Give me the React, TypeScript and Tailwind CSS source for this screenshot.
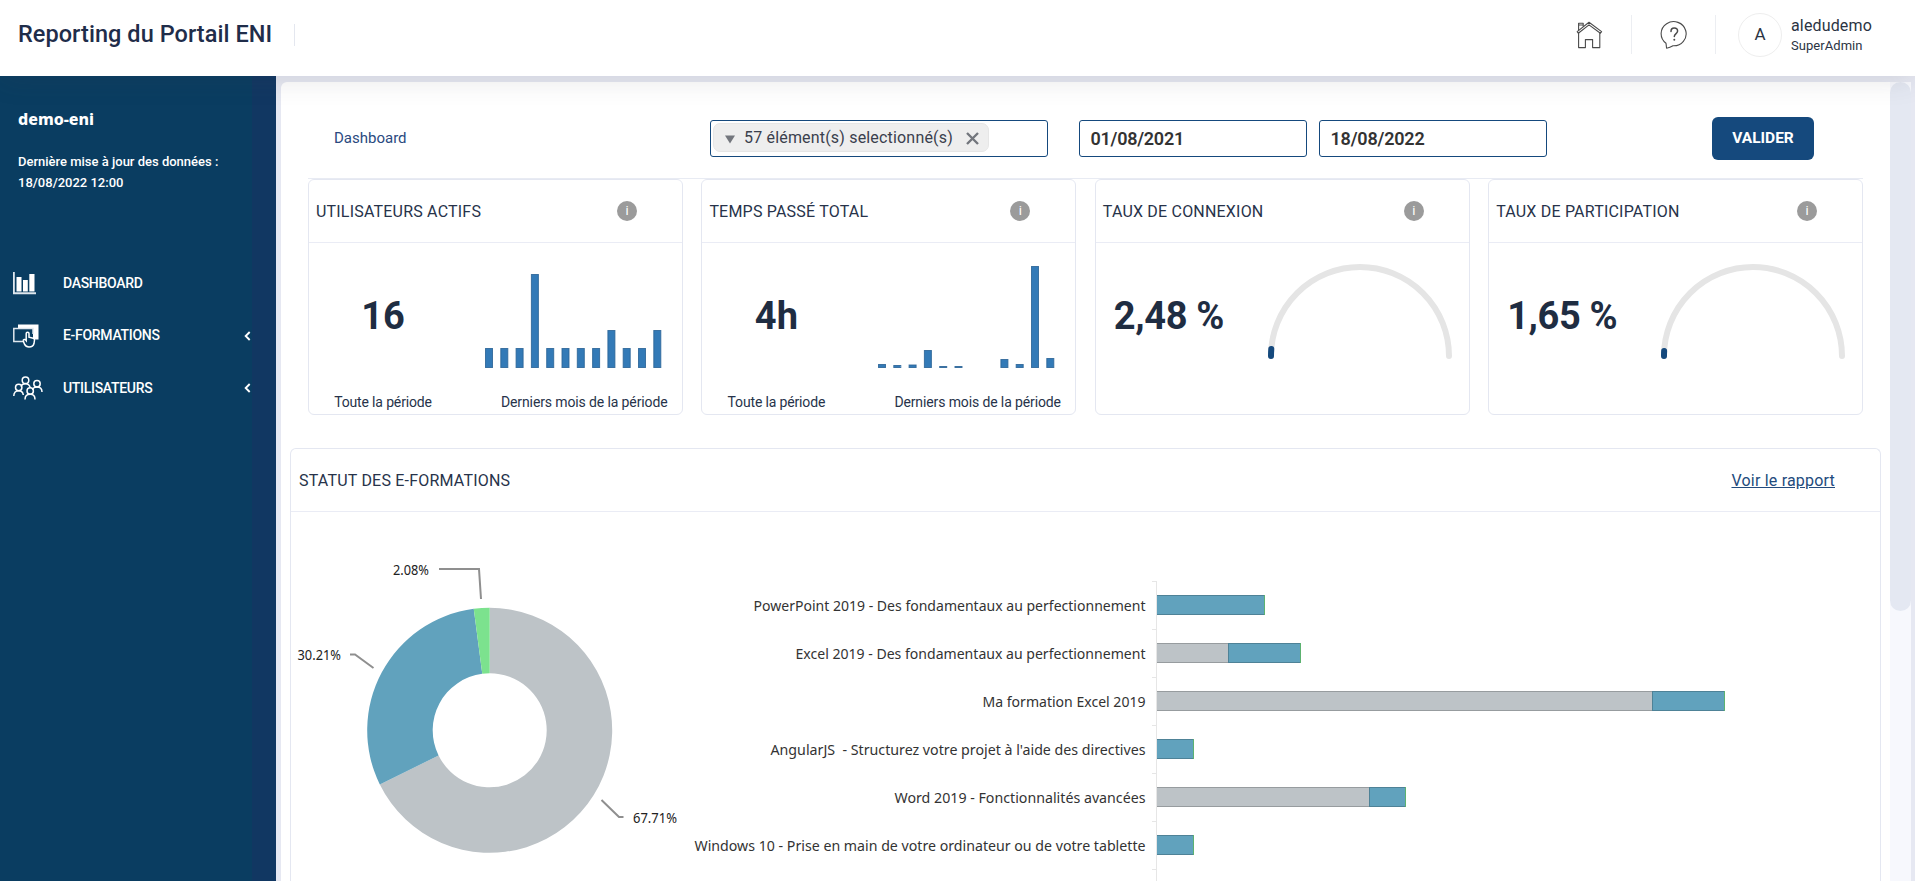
import type { ReactNode } from 'react';

const ACTIVE_USERS = [20, 20, 20, 94, 20, 20, 20, 20, 38, 20, 20, 38];
const TIME_SPENT = [4, 3, 3.5, 18, 2, 2, 0, 0, 9, 4, 102, 10];

const TRAININGS = [
  { name: 'PowerPoint 2019 - Des fondamentaux au perfectionnement', width: 392, todo: 0, doing: 107 },
  { name: 'Excel 2019 - Des fondamentaux au perfectionnement', width: 350, todo: 71, doing: 72 },
  { name: 'Ma formation Excel 2019', width: 163, todo: 495, doing: 72 },
  { name: "AngularJS \u00a0- Structurez votre projet à l'aide des directives", width: 375, todo: 0, doing: 36 },
  { name: 'Word 2019 - Fonctionnalités avancées', width: 251, todo: 212, doing: 36 },
  { name: 'Windows 10 - Prise en main de votre ordinateur ou de votre tablette', width: 451, todo: 0, doing: 36 },
];

function HouseIcon() {
  return (
    <svg width="27" height="28" viewBox="0 0 27 28" fill="none" stroke="#4a4a4a" strokeWidth="1.1" strokeLinejoin="round">
      <path d="M1.2 10.6 13 1.2 25.6 10.6 24.4 12.2 13 3.9 2.3 12.2Z" />
      <path d="M2.6 9.4V2.2H7.2V5.6M2.6 4H7" />
      <path d="M2.6 12V26.6H9.4V18.6H16.6V26.6H23.8V12" />
    </svg>
  );
}

function HelpIcon() {
  return (
    <svg width="28" height="30" viewBox="0 0 28 30" fill="none" stroke="#4a4a4a" strokeWidth="1.1" strokeLinejoin="round" strokeLinecap="round">
      <path d="M6 23.300A12.500 12.100 0 1 1 13 25.800C10.800 27.200 8.800 27.900 6.600 28.200 6.300 26.500 6.300 25 6 23.300Z" />
      <path d="M11 11.400C11 9.200 12.400 8 14.200 8S17.600 9.200 17.600 11.100C17.600 13.600 14.300 13.600 14.300 16.600" strokeWidth="1.5" />
      <path d="M14.300 19.600V19.800" strokeWidth="1.900" />
    </svg>
  );
}

function ChartIcon() {
  return (
    <svg width="23" height="24" viewBox="0 0 23 24">
      <path d="M0 1H1.800V21.300H23V23.300H0Z" fill="#dfe7ee" />
      <path d="M3.500 6H8.500V20.500H3.500ZM10 9H14.800V20.500H10ZM16.300 3H21.500V20.500H16.300Z" fill="#fff" />
    </svg>
  );
}

function TrainingIcon() {
  return (
    <svg width="27" height="24" viewBox="0 0 27 24">
      <path d="M5 .500H25.500V15.500H20V4.500H5Z" fill="#fff" />
      <path d="M10.500 17.500H.8V4.500H20V10" fill="none" stroke="#dfe7ee" strokeWidth="1.500" />
      <path
        d="M13.200 16V9.500C13.200 7.700 16 7.700 16 9.500V13.200L20.300 14.200C21.300 14.500 21.600 15.200 21.500 16.200L21 19.500C20.500 21.700 18.500 23 16 23 13.500 23 12.300 21.800 11.500 20.200L10.300 17C10 15.300 12 14.800 13.200 16.500Z"
        fill="#0a3d61"
        stroke="#fff"
        strokeWidth="1.500"
      />
    </svg>
  );
}

function UsersIcon() {
  return (
    <svg width="30" height="24" viewBox="0 0 30 24" fill="none" stroke="#fff" strokeWidth="1.500">
      <circle cx="12.500" cy="4.300" r="3.300" />
      <circle cx="5.700" cy="11.500" r="3.200" />
      <circle cx="24" cy="7.800" r="3.200" />
      <circle cx="17.200" cy="15" r="3.200" />
      <path d="M.8 20C.8 16.500 2.800 14.700 5.700 14.700S10 16.500 10.300 19M8 10.500C8.500 8.700 10 7.700 12.500 7.700S16.500 9 17.200 11.500M19.500 14C20 12 21.500 11 24 11 27 11 29 13 29 16M12 23.500C12 20 14 18.300 17.200 18.300S22 20 22 23.500" />
    </svg>
  );
}

function Chevron() {
  return (
    <svg width="7" height="10" viewBox="0 0 7 10" fill="none" stroke="#fff" strokeWidth="1.900">
      <path d="M5.700 1 1.700 5 5.700 9" />
    </svg>
  );
}

function MenuItem({ icon, label, chevron }: { icon: ReactNode; label: string; chevron?: boolean }) {
  return (
    <li className="flex h-[52.5px] items-center pl-[13px] pr-[25px]">
      <span className="w-[50px]">{icon}</span>
      <span className="flex-1 text-[14px] font-medium tracking-[-0.3px] text-white">{label}</span>
      {chevron && <Chevron />}
    </li>
  );
}

function Sidebar() {
  return (
    <aside className="flex w-[276px] shrink-0 flex-col bg-[linear-gradient(to_right,#0a3d61_252px,#113762_252px)] text-white">
      <h2 className="mt-[32px] pl-[18px] font-['Noto_Sans'] text-[16px] leading-[22px] font-extrabold tracking-[0px]">demo-eni</h2>
      <p className="mt-[21px] pl-[18px] text-[13px] leading-[21px] font-medium">
        Dernière mise à jour des données :
        <br />
        18/08/2022 12:00
      </p>
      <ul className="mt-[64px]">
        <MenuItem icon={<ChartIcon />} label="DASHBOARD" />
        <MenuItem icon={<TrainingIcon />} label="E-FORMATIONS" chevron />
        <MenuItem icon={<UsersIcon />} label="UTILISATEURS" chevron />
      </ul>
    </aside>
  );
}

function Header() {
  return (
    <header className="z-10 flex h-[76px] shrink-0 items-start bg-white shadow-[0_4px_28px_rgba(60,60,70,0.13)]">
      <h1 className="mt-[18px] ml-[18px] w-[276px] text-[23.5px] leading-[32px] font-medium tracking-[0.05px] text-[#1f2d4a]">Reporting du Portail ENI</h1>
      <div className="mt-[24px] h-[22px] w-px bg-[#e4e7ef]" />
      <div className="flex-1" />
      <div className="mt-[21px] mr-[28px]">
        <HouseIcon />
      </div>
      <div className="mt-[15px] h-[39px] w-px bg-[#eceef2]" />
      <div className="mt-[20px] mr-[27px] ml-[28px]">
        <HelpIcon />
      </div>
      <div className="mt-[15px] h-[39px] w-px bg-[#eceef2]" />
      <div className="mt-[13px] ml-[22px] flex h-[44px] w-[44px] items-center justify-center rounded-full border border-[#eeeeee] text-[17px] text-[#2b3443]">A</div>
      <div className="mt-[15px] ml-[9px] w-[124px] text-[#2b3443]">
        <div className="text-[16px] leading-[22px] tracking-[0.15px]">aledudemo</div>
        <div className="-mt-px text-[13px] leading-[19px] tracking-[0.05px]">SuperAdmin</div>
      </div>
    </header>
  );
}

function Filters() {
  return (
    <div className="mr-[27px] ml-[27px] flex h-[97px] items-start border-b border-[#e8ebf3]">
      <span className="mt-[46px] w-[402px] pl-[26px] text-[15px] leading-[20px] text-[#2a4a80]">Dashboard</span>
      <div className="mt-[38px] flex h-[37px] w-[338px] items-start rounded-[3px] border border-[#15497d] p-[2px]">
        <div className="flex h-[29px] w-[276px] items-center rounded-[7px] border border-[#e6e6e6] bg-[#eeeeee] pl-[11px]">
          <svg width="10" height="9" viewBox="0 0 10 9" className="mt-[3px]">
            <path d="M0 .5H10L5 8.500Z" fill="#73767d" />
          </svg>
          <span className="ml-[9px] w-[222px] text-[16px] tracking-[0.18px] text-[#3a404d]">57 élément(s) selectionné(s)</span>
          <svg width="13" height="13" viewBox="0 0 13 13" className="mt-[2px]">
            <path d="M1 1 12 12M12 1 1 12" stroke="#73767d" strokeWidth="2.400" />
          </svg>
        </div>
      </div>
      <div className="mt-[38px] ml-[31px] flex h-[37px] w-[228px] items-center rounded-[3px] border border-[#15497d] pl-[10.5px] text-[18px] font-semibold tracking-[-0.25px] text-[#333333]">01/08/2021</div>
      <div className="mt-[38px] ml-[12px] flex h-[37px] w-[228px] items-center rounded-[3px] border border-[#15497d] pl-[10.5px] text-[18px] font-semibold tracking-[-0.2px] text-[#333333]">18/08/2022</div>
      <button className="mt-[35px] ml-[165px] h-[43px] w-[102px] rounded-[6px] bg-[#15497d] text-[15.5px] font-bold text-white">VALIDER</button>
    </div>
  );
}

function KpiCard({ title, children }: { title: string; children: ReactNode }) {
  return (
    <section className="flex h-[236px] flex-col rounded-[6px] border border-[#e4e7f1] bg-white">
      <div className="flex h-[63px] items-center border-b border-[#eaecf5] pl-[7px]">
        <h3 className="w-[301px] pt-px text-[16px] tracking-[0.2px] text-[#27334a]">{title}</h3>
        <span className="flex h-[20px] w-[20px] items-center justify-center rounded-full bg-[#9b9b9b] text-[13px] text-white">i</span>
      </div>
      {children}
    </section>
  );
}

function BarKpi({ value, bars }: { value: string; bars: number[] }) {
  return (
    <div className="flex">
      <div className="flex w-[148px] shrink-0 flex-col items-center">
        <div className="mt-[50px] h-[47px] text-[38px] leading-[47px] font-bold text-[#1f2d42]">{value}</div>
        <div className="mt-[53px] text-[14px] leading-[18px] tracking-[-0.15px] whitespace-nowrap text-[#27334a]">Toute la période</div>
      </div>
      <div className="flex flex-1 flex-col">
        <svg width="190" height="126" viewBox="0 0 190 126" className="ml-[28px]">
          {bars.map((h, i) =>
            h > 0 ? (
              <rect key={i} x={0.500 + i * 15.300} y={125.500 - h} width="7" height={h - 1} fill="#337ab7" stroke="#2a6496" strokeOpacity="0.85" />
            ) : null,
          )}
        </svg>
        <div className="mt-[24px] ml-[44px] text-[14px] leading-[18px] tracking-[-0.12px] whitespace-nowrap text-[#27334a]">Derniers mois de la période</div>
      </div>
    </div>
  );
}

function GaugeKpi({ value, arc }: { value: string; arc: number }) {
  const angle = arc / 89;
  const x = 95 - 89 * Math.cos(angle);
  const y = 95 - 89 * Math.sin(angle);
  return (
    <div className="flex">
      <div className="mt-[50px] w-[169px] pl-[18px] text-[38px] leading-[47px] font-bold tracking-[-0.35px] text-[#1f2d42]">{value}</div>
      <svg width="190" height="100" viewBox="0 0 190 100" className="mt-[18px]">
        <path d="M6 95A89 89 0 0 1 184 95" fill="none" stroke="#e5e5e5" strokeWidth="6" strokeLinecap="round" />
        <path d={`M6 95A89 89 0 0 1 ${x} ${y}`} fill="none" stroke="#15497d" strokeWidth="6" strokeLinecap="round" />
      </svg>
    </div>
  );
}

function StatusDonut() {
  const point = (fraction: number, r: number) => {
    const a = fraction * 2 * Math.PI;
    return `${198.700 + r * Math.sin(a)} ${218.300 - r * Math.cos(a)}`;
  };
  const slice = (from: number, to: number) => {
    const large = to - from > 0.5 ? 1 : 0;
    return `M${point(from, 122.500)}A122.500 122.500 0 ${large} 1 ${point(to, 122.500)}L${point(to, 57)}A57 57 0 ${large} 0 ${point(from, 57)}Z`;
  };
  return (
    <svg width="400" height="369" viewBox="0 0 400 369" className="shrink-0" fontFamily="'Noto Sans', sans-serif" fontSize="13.500" fill="#222">
      <path d={slice(0, 0.6771)} fill="#bdc3c7" />
      <path d={slice(0.6771, 0.9792)} fill="#61a2bd" />
      <path d={slice(0.9792, 1)} fill="#7ce28e" />
      <g fill="none" stroke="#8f8f8f" strokeWidth="2">
        <path d="M148 57H188L190 87" />
        <path d="M59 142.500H64L82.500 156" />
        <path d="M310.500 288 328 305H332.500" />
      </g>
      <text x="102" y="62.500" textLength="36" lengthAdjust="spacingAndGlyphs">2.08%</text>
      <text x="6.500" y="148" textLength="43.500" lengthAdjust="spacingAndGlyphs">30.21%</text>
      <text x="342" y="311" textLength="44" lengthAdjust="spacingAndGlyphs">67.71%</text>
    </svg>
  );
}

function TrainingBars() {
  return (
    <svg width="1188" height="369" viewBox="1 0 1188 369" className="shrink-0" fontFamily="'Noto Sans', sans-serif" fontSize="14.500" fill="#333">
      <path d="M466.500 69V369" stroke="#e6e6e6" />
      {[0, 1, 2, 3, 4, 5, 6].map((i) => (
        <path key={i} d={`M462 ${69.500 + i * 48}H467`} stroke="#e6e6e6" />
      ))}
      {TRAININGS.map((t, i) => {
        const y = 83.500 + i * 48;
        return (
          <g key={t.name}>
            <text x={455.500 - t.width} y={y + 15.500} textLength={t.width} lengthAdjust="spacingAndGlyphs">{t.name}</text>
            {t.todo > 0 && <rect x="467" y={y} width={t.todo} height="19" fill="#bdc3c7" />}
            {t.todo > 0 && <path d={`M467 ${y}H${467 + t.todo}M467 ${y + 19}H${467 + t.todo}`} stroke="#979c9f" />}
            <rect x={467 + t.todo} y={y} width={t.doing} height="19" fill="#61a2bd" />
            <path d={`M467 ${y}m${t.todo} 0h${t.doing}M467 ${y + 19}m${t.todo} 0h${t.doing}`} stroke="#4e8297" />
            {t.todo > 0 && <path d={`M${467.500 + t.todo} ${y}v19`} stroke="#4e8297" />}
            <path d={`M${467.500 + t.todo + t.doing} ${y - 0.5}v20`} stroke="#5cb270" />
          </g>
        );
      })}
    </svg>
  );
}

function StatusPanel() {
  return (
    <section className="mt-[33px] ml-[9px] w-[1591px] rounded-t-[6px] border border-b-0 border-[#e4e7f1]">
      <div className="flex h-[63px] items-center justify-between border-b border-[#eaecf5] pt-[2px] pr-[45px] pl-[8px]">
        <h3 className="text-[16px] tracking-[0.2px] text-[#27334a]">STATUT DES E-FORMATIONS</h3>
        <a className="text-[16px] tracking-[0.2px] text-[#234b7d] underline">Voir le rapport</a>
      </div>
      <div className="flex h-[369px]">
        <StatusDonut />
        <TrainingBars />
      </div>
    </section>
  );
}

export default function App() {
  return (
    <div className="flex h-[881px] w-[1915px] flex-col overflow-hidden bg-[#e6e8f2] font-['Roboto',sans-serif]">
      <Header />
      <div className="flex min-h-0 flex-1">
        <Sidebar />
        <main className="mt-[6px] ml-[5px] flex w-[1630px] overflow-hidden rounded-tl-[6px] bg-white">
          <div className="w-[1609px] shrink-0 overflow-hidden">
            <Filters />
            <div className="ml-[27px] grid w-[1555px] grid-cols-4 gap-[18.500px]">
              <KpiCard title="UTILISATEURS ACTIFS">
                <BarKpi value="16" bars={ACTIVE_USERS} />
              </KpiCard>
              <KpiCard title="TEMPS PASSÉ TOTAL">
                <BarKpi value="4h" bars={TIME_SPENT} />
              </KpiCard>
              <KpiCard title="TAUX DE CONNEXION">
                <GaugeKpi value="2,48 %" arc={7} />
              </KpiCard>
              <KpiCard title="TAUX DE PARTICIPATION">
                <GaugeKpi value="1,65 %" arc={5} />
              </KpiCard>
            </div>
            <StatusPanel />
          </div>
          <div className="w-[21px] bg-[#f7f8fd]">
            <div className="h-[529px] rounded-full bg-[#e4e8f2]" />
          </div>
        </main>
      </div>
    </div>
  );
}
